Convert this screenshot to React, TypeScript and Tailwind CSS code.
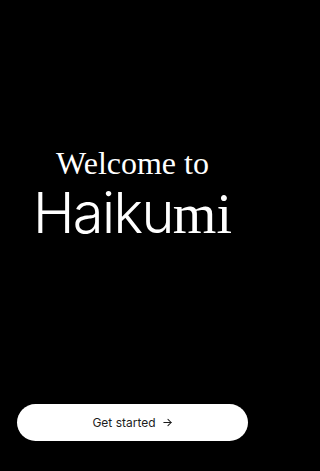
import React from "react";

export default function App() {
  return (
    <div className="w-full min-h-[471px] bg-black">
      <div className="w-[265px] h-[471px] bg-black flex flex-col">
        <div className="flex-1 flex flex-col items-center pt-[147px]">
          <div className="text-white text-[32px] leading-[32px] font-['Liberation_Serif',serif]">
            Welcome to
          </div>
          <div className="text-white text-[56px] leading-[56px] mt-[4px] whitespace-nowrap">
            <span className="font-['Inter',sans-serif] font-light tracking-[-1.6px]">Haiku</span>
            <span className="font-['Liberation_Serif',serif]">mi</span>
          </div>
        </div>
        <div className="px-[17px] pb-[30px]">
          <button className="w-full h-[37px] rounded-full bg-white flex items-center justify-center gap-[6px] text-[#1c1c1c] text-[12px] font-['Inter',sans-serif]">
            <span>Get started</span>
            <svg width="11" height="11" viewBox="0 0 24 24" fill="none" stroke="currentColor" strokeWidth="2.2" strokeLinecap="round" strokeLinejoin="round">
              <path d="M4 12h16" />
              <path d="M13 5l7 7-7 7" />
            </svg>
          </button>
        </div>
      </div>
    </div>
  );
}
